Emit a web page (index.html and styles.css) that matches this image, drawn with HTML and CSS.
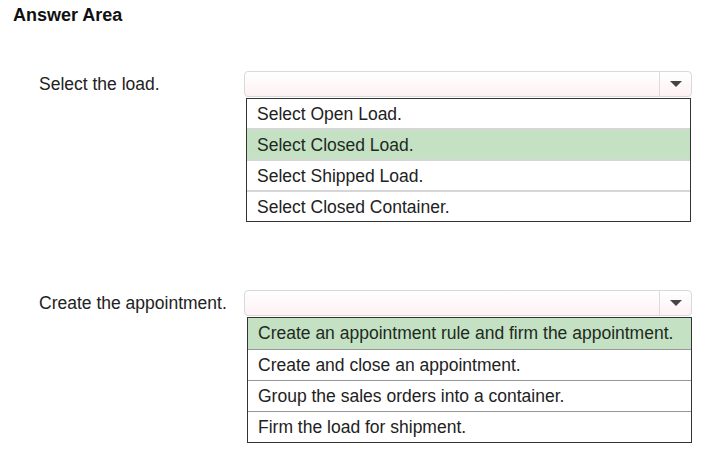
FILE: index.html
```html
<!DOCTYPE html>
<html lang="en">
<head>
    <meta charset="UTF-8">
    <title>Answer Area</title>
    <link rel="stylesheet" href="styles.css">
</head>
<body>
    <h1 class="title">Answer Area</h1>

    <section class="question q-load">
        <div class="label">Select the load.</div>
        <div class="picker">
            <div class="select-box">
                <span class="select-value"></span>
                <span class="select-arrow"><i class="caret"></i></span>
            </div>
            <ul class="options">
                <li>Select Open Load.</li>
                <li class="chosen">Select Closed Load.</li>
                <li>Select Shipped Load.</li>
                <li>Select Closed Container.</li>
            </ul>
        </div>
    </section>

    <section class="question q-appointment">
        <div class="label">Create the appointment.</div>
        <div class="picker">
            <div class="select-box">
                <span class="select-value"></span>
                <span class="select-arrow"><i class="caret"></i></span>
            </div>
            <ul class="options">
                <li class="chosen">Create an appointment rule and firm the appointment.</li>
                <li>Create and close an appointment.</li>
                <li>Group the sales orders into a container.</li>
                <li>Firm the load for shipment.</li>
            </ul>
        </div>
    </section>
</body>
</html>
```

FILE: styles.css
```css
body {
    margin: 0;
    background: #fff;
    font-family: "Liberation Sans", Arial, sans-serif;
    color: #222;
}
.title {
    margin: 0;
    padding: 5px 0 0 13px;
    font-size: 18px;
    font-weight: bold;
    color: #111;
    line-height: 20px;
}
.question {
    display: grid;
    grid-template-columns: 205px 448px;
    padding-left: 39px;
}
.q-load {
    margin-top: 46px;
}
.q-appointment {
    margin-top: 68px;
}
.label {
    font-size: 17.5px;
    line-height: 26px;
}
.select-box {
    display: flex;
    height: 24px;
    border: 1px solid #d9d9d9;
    border-radius: 4px;
    background: linear-gradient(#fff, #fdf1f3);
}
.select-value {
    flex: 1;
}
.select-arrow {
    width: 31px;
    border-left: 1px solid #dcdcdc;
    display: flex;
    align-items: center;
    justify-content: center;
}
.caret {
    width: 0;
    height: 0;
    border-left: 6px solid transparent;
    border-right: 6px solid transparent;
    border-top: 6px solid #444;
}
.options {
    list-style: none;
    margin: 1px 1px 0 2px;
    padding: 0;
    border: 1px solid #333;
    font-size: 17.5px;
}
.options li {
    height: 29px;
    line-height: 30px;
    padding-left: 10px;
    border-top: 2px solid #d6d6d6;
}
.options li:first-child {
    border-top: none;
}
.options .chosen {
    background: #c4e1c4;
    color: #1e2a1e;
}
.q-appointment .options {
    margin: 1px 0 0 3px;
}
.q-appointment .options li {
    height: 30px;
    border-top: 1px solid #999;
}
.q-appointment .options li:first-child {
    border-top: none;
    height: 31px;
}
```
